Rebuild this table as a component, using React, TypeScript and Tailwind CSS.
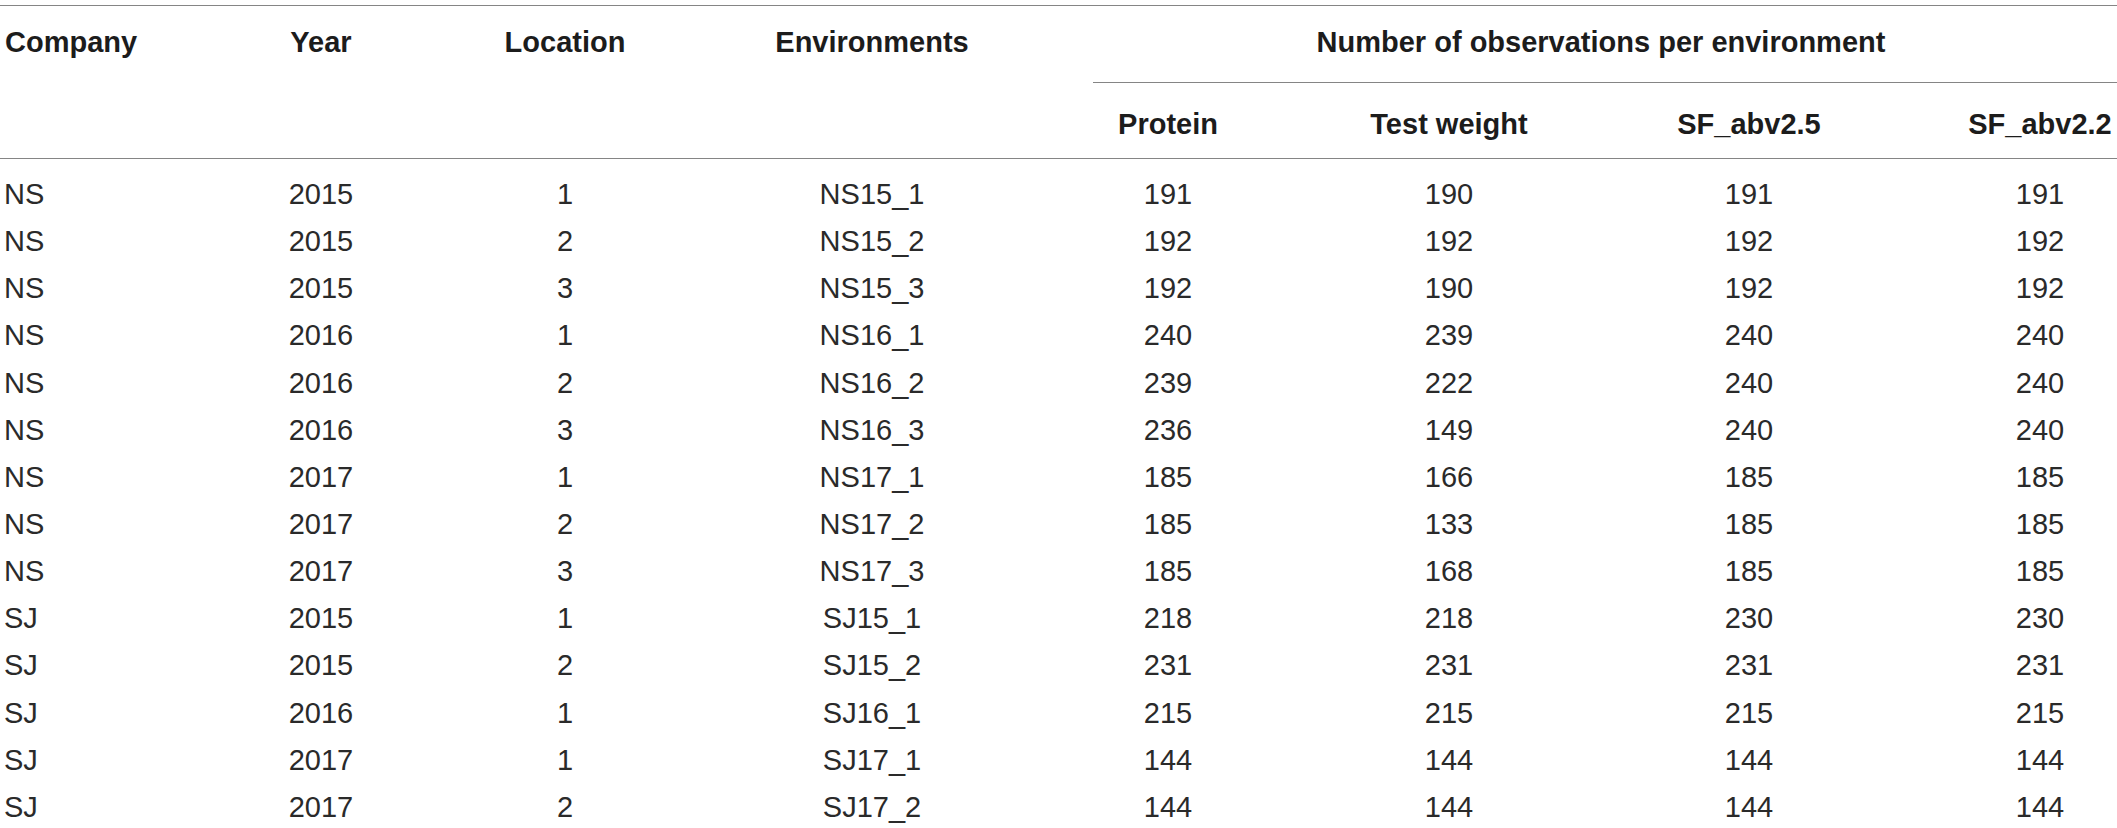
const rows: string[][] = [
  ['NS', '2015', '1', 'NS15_1', '191', '190', '191', '191'],
  ['NS', '2015', '2', 'NS15_2', '192', '192', '192', '192'],
  ['NS', '2015', '3', 'NS15_3', '192', '190', '192', '192'],
  ['NS', '2016', '1', 'NS16_1', '240', '239', '240', '240'],
  ['NS', '2016', '2', 'NS16_2', '239', '222', '240', '240'],
  ['NS', '2016', '3', 'NS16_3', '236', '149', '240', '240'],
  ['NS', '2017', '1', 'NS17_1', '185', '166', '185', '185'],
  ['NS', '2017', '2', 'NS17_2', '185', '133', '185', '185'],
  ['NS', '2017', '3', 'NS17_3', '185', '168', '185', '185'],
  ['SJ', '2015', '1', 'SJ15_1', '218', '218', '230', '230'],
  ['SJ', '2015', '2', 'SJ15_2', '231', '231', '231', '231'],
  ['SJ', '2016', '1', 'SJ16_1', '215', '215', '215', '215'],
  ['SJ', '2017', '1', 'SJ17_1', '144', '144', '144', '144'],
  ['SJ', '2017', '2', 'SJ17_2', '144', '144', '144', '144'],
];

const cols = 'grid grid-cols-[283px_76px_412px_202px_390px_172px_428px_154px]';

export default function App() {
  return (
    <div
      className="w-[2117px] min-h-[828px] bg-white pt-[5px] text-[29px]"
      style={{ fontFamily: '"Liberation Sans", Arial, Helvetica, sans-serif' }}
    >
      <div className={`${cols} border-t border-b border-[#858585] font-bold text-[#1c1c1c] leading-[36px]`}>
        <div className="row-span-2 pt-[18px] pl-[5px] text-left whitespace-nowrap">Company</div>
        <div className="row-span-2 pt-[18px] text-center whitespace-nowrap">Year</div>
        <div className="row-span-2 pt-[18px] text-center whitespace-nowrap">Location</div>
        <div className="row-span-2 pt-[18px] text-center whitespace-nowrap">Environments</div>
        <div className="col-span-4 h-[77px] flex flex-col">
          <div className="pt-[18px] pl-[112px] text-center whitespace-nowrap">
            Number of observations per environment
          </div>
          <div className="mt-auto ml-[120px] h-px bg-[#858585]" />
        </div>
        <div className="h-[75px] pt-[23px] text-center whitespace-nowrap">Protein</div>
        <div className="h-[75px] pt-[23px] text-center whitespace-nowrap">Test weight</div>
        <div className="h-[75px] pt-[23px] text-center whitespace-nowrap">SF_abv2.5</div>
        <div className="h-[75px] pt-[23px] text-center whitespace-nowrap">SF_abv2.2</div>
      </div>

      <div className="pt-[12px] text-[#2a2a2a]">
        {rows.map((r, i) => (
          <div key={i} className={`${cols} h-[47.15px] leading-[47.15px]`}>
            {r.map((cell, j) => (
              <div
                key={j}
                className={j === 0 ? 'pl-[4px] text-left whitespace-nowrap' : 'text-center whitespace-nowrap'}
              >
                {cell}
              </div>
            ))}
          </div>
        ))}
      </div>
    </div>
  );
}
